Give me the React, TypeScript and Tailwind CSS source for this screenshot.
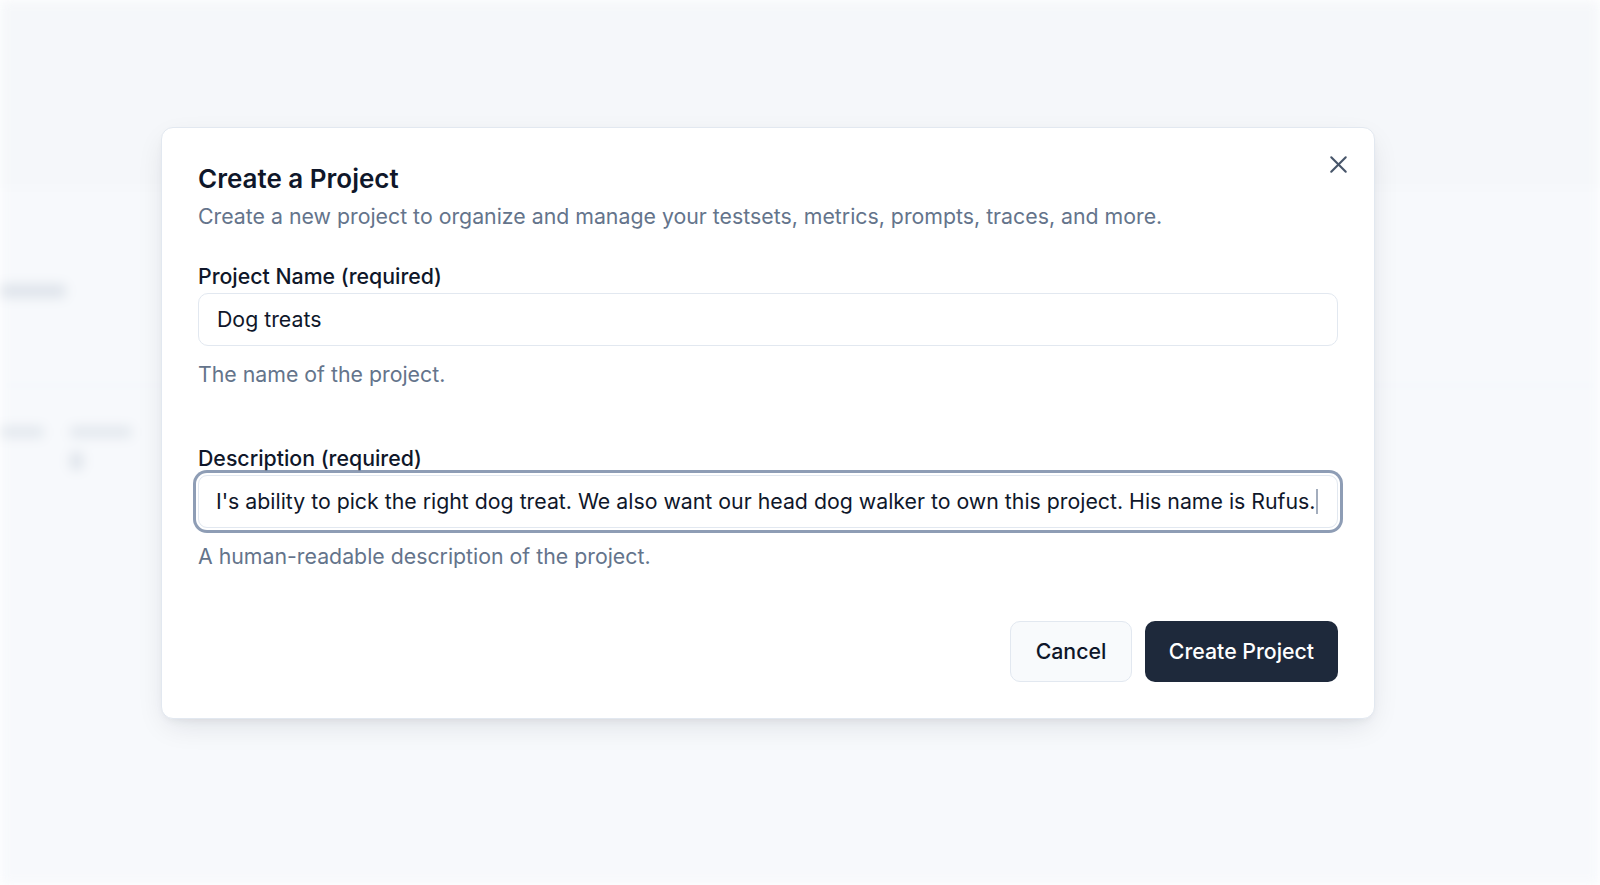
import { X } from "lucide-react"

const visibleDescription =
    "I's ability to pick the right dog treat. We also want our head dog walker to own this project. His name is Rufus."

function BlurredPage() {
    return (
        <div className="h-[885px] w-full bg-[#f7f9fc] blur-[6px]">
            <div className="h-[188px] bg-[#f5f7fa]" />
            <div className="pt-[96px]">
                <div className="h-[14px] w-[66px] rounded bg-[#dfe4eb]" />
            </div>
            <div className="mt-[87px] h-px bg-[#eef1f5]" />
            <div className="flex gap-[26px] pt-[40px]">
                <div className="h-[12px] w-[44px] rounded bg-[#e3e8ee]" />
                <div className="flex flex-col gap-[14px]">
                    <div className="h-[12px] w-[62px] rounded bg-[#e3e8ee]" />
                    <div className="h-[18px] w-[13px] rounded bg-[#dfe4eb]" />
                </div>
            </div>
        </div>
    )
}

export default function App() {
    return (
        <div className="relative h-[885px] w-full overflow-hidden font-['Inter',sans-serif]">
            <BlurredPage />
            <div className="absolute inset-0 pl-[161px] pt-[127px]">
                <div className="relative w-[1214px] rounded-[12px] border border-[#e2e8f0] bg-white px-[36px] pb-[36px] pt-[33px] shadow-[0_10px_30px_-6px_rgba(15,23,42,0.12),0_4px_10px_-4px_rgba(15,23,42,0.08)]">
                    <button className="absolute right-[21px] top-[22px] text-[#475569]">
                        <X size={29} strokeWidth={1.7} />
                    </button>
                    <h2 className="text-[26px] font-semibold leading-[36px] text-[#0f172a]">Create a Project</h2>
                    <p className="mt-[4px] text-[21.3px] leading-[30px] text-[#64748b]">
                        Create a new project to organize and manage your testsets, metrics, prompts, traces, and more.
                    </p>

                    <label className="mt-[31px] block text-[21.3px] font-medium leading-[28px] text-[#0f172a]">
                        Project Name (required)
                    </label>
                    <div className="mt-[3px] flex h-[53px] items-center rounded-[10px] border border-[#e2e8f0] bg-white px-[18px] text-[21.3px] text-[#0f172a]">
                        Dog treats
                    </div>
                    <p className="mt-[13px] text-[21.3px] leading-[30px] text-[#64748b]">The name of the project.</p>

                    <label className="mt-[55px] block text-[21.3px] font-medium leading-[28px] text-[#0f172a]">
                        Description (required)
                    </label>
                    <div className="mt-[3px] flex h-[53px] items-center rounded-[9px] border border-[#e2e8f0] bg-white px-[17px] text-[21.3px] text-[#0f172a] ring-[3px] ring-[#8e9db5] ring-offset-2 ring-offset-white">
                        <div className="flex flex-1 items-center overflow-hidden whitespace-nowrap">
                            <span>{visibleDescription}</span>
                            <span className="ml-[1px] h-[25px] w-[2px] shrink-0 bg-[#a3adbd]" />
                        </div>
                    </div>
                    <p className="mt-[13px] text-[21.3px] leading-[30px] text-[#64748b]">
                        A human-readable description of the project.
                    </p>

                    <div className="mt-[50px] flex justify-end gap-[13px]">
                        <button className="h-[61px] w-[122px] rounded-[10px] border border-[#e2e8f0] bg-[#f8fafc] text-[21.3px] font-medium text-[#0f172a]">
                            Cancel
                        </button>
                        <button className="h-[61px] w-[193px] rounded-[10px] bg-[#1e293b] text-[21.3px] font-medium text-white">
                            Create Project
                        </button>
                    </div>
                </div>
            </div>
        </div>
    )
}
